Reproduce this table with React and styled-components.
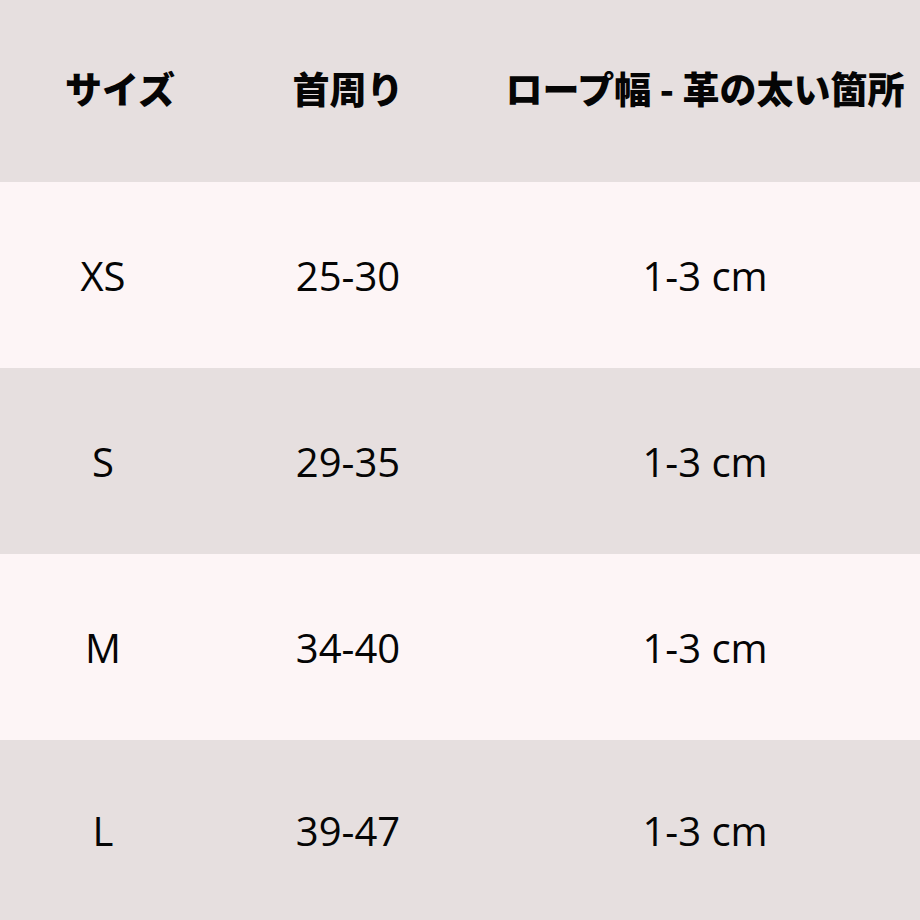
import React from "react";
import styled, { createGlobalStyle } from "styled-components";

const Global = createGlobalStyle`
  html, body { margin: 0; padding: 0; background: #e6dfdf; }
  #root { width: 920px; height: 920px; }
`;

const Table = styled.div`
  display: grid;
  grid-template-columns: 206px 284px 1fr;
  grid-template-rows: 182px repeat(3, 186px) 180px;
  width: 920px;
  height: 920px;
`;

const Cell = styled.div`
  display: flex;
  align-items: center;
  justify-content: center;
  background: ${(p) => (p.$pink ? "#fdf5f6" : "#e6dfdf")};
  color: #050505;
  font-family: ${(p) =>
    p.$head
      ? '"Noto Sans CJK JP", "Noto Sans", sans-serif'
      : '"Open Sans", "Noto Sans", sans-serif'};
  font-size: ${(p) => (p.$head ? "37px" : "40px")};
  font-weight: ${(p) => (p.$head ? 900 : 500)};
  padding-left: ${(p) => p.$shift || 0}px;
  padding-bottom: ${(p) => (p.$head ? 6 : 0)}px;
  white-space: nowrap;
`;

const rows = [
  ["XS", "25-30", "1-3 cm"],
  ["S", "29-35", "1-3 cm"],
  ["M", "34-40", "1-3 cm"],
  ["L", "39-47", "1-3 cm"],
];

export default function App() {
  return (
    <>
      <Global />
      <Table>
        <Cell $head $shift={34}>サイズ</Cell>
        <Cell $head>首周り</Cell>
        <Cell $head>ロープ幅 - 革の太い箇所</Cell>
        {rows.map((r, i) =>
          r.map((c, j) => (
            <Cell key={`${i}-${j}`} $pink={i % 2 === 0}>
              {c}
            </Cell>
          ))
        )}
      </Table>
    </>
  );
}
